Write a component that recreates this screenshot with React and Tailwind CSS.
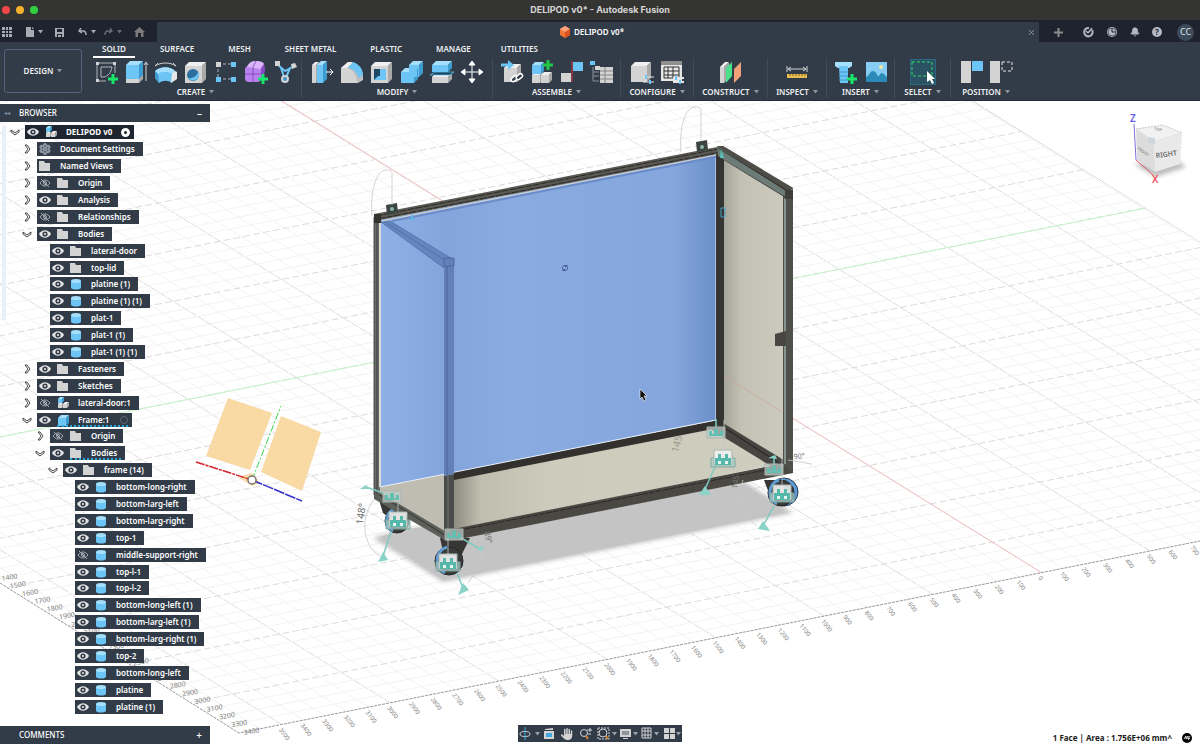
import { Bell, Settings, X } from "lucide-react";
import { FaHand } from "react-icons/fa6";

const BLUE = "#6cc5f5";
const GREY = "#d3d3d3";

const TABS = ["SOLID", "SURFACE", "MESH", "SHEET METAL", "PLASTIC", "MANAGE", "UTILITIES"];

/* ---------- toolbar drawings, all on a 26 x 26 grid ---------- */

function Plus({ x, y, color = "#19e56b" }) {
  return (
    <path d={`M${x - 5} ${y}h10M${x} ${y - 5}v10`} stroke={color} strokeWidth="3" fill="none" />
  );
}

function Block({ x, y, w, h, d = 4, front, top, side }) {
  return (
    <g>
      <path d={`M${x} ${y}h${w}v${h}h${-w}z`} fill={front} />
      <path d={`M${x} ${y}l${d} ${-d}h${w}l${-d} ${d}z`} fill={top} />
      <path d={`M${x + w} ${y}l${d} ${-d}v${h}l${-d} ${d}z`} fill={side} />
    </g>
  );
}

const blueBlock = { front: "#6cc5f5", top: "#a5dffb", side: "#3e9bd0" };
const greyBlock = { front: "#d3d3d3", top: "#efefef", side: "#a9a9a9" };

const ICONS = {
  sketch: (
    <>
      <path d="M4 4h18M4 4v18M4 22h9M22 4v10M8 8v10h3c4-1 7-4 8-10z" stroke="#aeb4bb" fill="none" />
      <path d="M3 3h3v3H3zM20 3h3v3h-3zM3 20h3v3H3z" fill={GREY} />
      <Plus x={20} y={20} />
    </>
  ),
  extrude: (
    <>
      <Block x={3} y={20} w={13} h={4} {...greyBlock} />
      <Block x={3} y={6} w={13} h={14} {...blueBlock} />
      <path d="M23 22V4M21 6l2-3 2 3" stroke={GREY} fill="none" />
    </>
  ),
  revolve: (
    <>
      <path d="M2 12c6-5 15-5 20 0l-3 12c-4-3-9-3-13 0l-4-5z" fill={BLUE} />
      <path d="M2 12c6-5 15-5 20 0l-3 3c-4-3-10-3-14 0z" fill="#a5dffb" />
      <path d="M22 12l2 1v7l-6 4 1-9z" fill="#e7e7e7" />
      <path d="M2 12l3 3 1 9-4-5z" fill="#3e9bd0" />
      <path d="M2 7c6-4 15-4 21 0M2 7l3-3M23 7l-3-3" stroke={GREY} fill="none" />
    </>
  ),
  hole: (
    <>
      <Block x={2} y={7} w={17} h={17} {...greyBlock} />
      <circle cx="10" cy="16" r="6" fill="#2c6f9c" />
      <path d="M5 19a6 6 0 1 0 10-7c0 4-4 8-10 7z" fill={BLUE} />
    </>
  ),
  pattern: (
    <>
      <path d="M5 5h17M5 5v15M5 20h17" stroke="#aeb4bb" strokeDasharray="3 2" fill="none" />
      <path d="M3 3h5v5H3z" fill={GREY} />
      <path d="M18 3h5v5h-5zM3 18h5v5H3zM18 18h5v5h-5z" fill={BLUE} />
    </>
  ),
  form: (
    <>
      <rect x="2" y="7" width="16" height="16" rx="4" fill="#b982ee" />
      <path d="M4 8c2-5 5-6 9-6 5 0 8 1 8 4l-3 4z" fill="#dcb5fb" />
      <path d="M18 9l3-4c2 5 1 11-3 15z" fill="#8a4bc6" />
      <path d="M2 15h16l3-4M10 23V8l3-6" stroke="#7a42b3" strokeWidth="0.8" fill="none" />
      <Plus x={20} y={20} />
    </>
  ),
  derive: (
    <>
      <path d="M4 5l8 7 9-5M8 9l4 12M17 9l-5 12" stroke={BLUE} strokeWidth="2" fill="none" />
      <path d="M2 2h5v5H2zM18 5l4-1 2 4-5 2z" fill="#d3d3d3" />
      <circle cx="12" cy="20" r="4" fill={GREY} />
      <circle cx="12" cy="20" r="2" fill="#4293c4" />
    </>
  ),
  pressPull: (
    <>
      <Block x={3} y={6} w={4} h={18} d={3} {...greyBlock} />
      <Block x={8} y={6} w={6} h={18} {...blueBlock} />
      <path d="M17 13h7M21 10l3 3-3 3" stroke="#fff" fill="none" />
    </>
  ),
  fillet: (
    <>
      <path d="M2 9l7-6c8 0 14 5 15 14v4l-5 3H2z" fill="#bdbdbd" />
      <path d="M2 9h6c6 2 10 7 10 15H2z" fill={GREY} />
      <path d="M2 9l7-6h5L8 9z" fill="#efefef" />
      <path d="M9 9l5-6c6 2 10 7 10 13l-5 3c0-5-4-9-10-10z" fill={BLUE} />
    </>
  ),
  shell: (
    <>
      <Block x={2} y={7} w={17} h={17} {...greyBlock} />
      <path d="M5 10h12v11H5z" fill="#1c4865" />
      <path d="M5 21l4-4h8v4zM11 10h6v7h-6z" fill={BLUE} />
    </>
  ),
  combine: (
    <>
      <Block x={10} y={6} w={10} h={12} {...blueBlock} />
      <Block x={2} y={13} w={13} h={11} {...blueBlock} />
      <path d="M10 9h8v9h-8z" fill={BLUE} />
    </>
  ),
  split: (
    <>
      <Block x={3} y={18} w={16} h={6} {...greyBlock} />
      <path d="M1 16l5-3h19l-4 3z" fill="#17455f" stroke={BLUE} strokeWidth="0.7" />
      <Block x={3} y={6} w={16} h={7} {...blueBlock} />
    </>
  ),
  move: (
    <path
      d="M13 3v20M3 13h20M10 6l3-4 3 4zM10 20l3 4 3-4zM6 10l-4 3 4 3zM20 10l4 3-4 3z"
      stroke="#fff"
      fill="#fff"
    />
  ),
  insertComp: (
    <>
      <Block x={5} y={9} w={13} h={14} {...greyBlock} />
      <path d="M2 6h10" stroke={BLUE} strokeWidth="3" />
      <path d="M9 1l6 5-6 5z" fill={BLUE} />
      <g stroke="#fff" strokeWidth="1.5" fill="#323c49">
        <rect x="12" y="18" width="7" height="4" rx="2" transform="rotate(-40 15 20)" />
        <rect x="17" y="16" width="7" height="4" rx="2" transform="rotate(-40 20 18)" />
      </g>
    </>
  ),
  newComp: (
    <>
      <Block x={3} y={16} w={8} h={8} d={3} {...greyBlock} />
      <Block x={12} y={16} w={8} h={8} d={3} {...greyBlock} />
      <Block x={3} y={6} w={9} h={9} d={3} {...blueBlock} />
      <Plus x={19} y={6} color="#20c745" />
    </>
  ),
  joint: (
    <>
      <path d="M2 14h10v9H2z" fill={GREY} />
      <path d="M14 3h10v9H14z" fill={BLUE} />
      <path d="M13 2v21" stroke="#d5354a" />
    </>
  ),
  bom: (
    <>
      <path d="M1 2h5v4H1z" fill={BLUE} />
      <path d="M6 7h5v4H6z" fill={GREY} />
      <path d="M4 8v14h6M4 13h6M4 17h6" stroke="#8a9097" fill="none" />
      <path d="M11 8h13v16H11z" fill={GREY} />
      <path d="M11 12h13M11 16h13M11 20h13M16 8v16" stroke="#868686" />
    </>
  ),
  configure: (
    <>
      <Block x={2} y={7} w={16} h={16} {...greyBlock} />
      <path d="M14 18h11M14 23h11" stroke="#e7e7e7" />
      <path d="M17 16v4M21 21v4" stroke={BLUE} strokeWidth="2" />
    </>
  ),
  table: (
    <>
      <path d="M2 3h21v19H2z" fill="#e7e7e7" />
      <path d="M2 2h21v4H2z" fill="#8f8f8f" />
      <path d="M5 8h15v11H5zM5 12h15M5 16h15M9 8v11M14 8v11" stroke="#333" fill="none" />
      <path d="M14 19h11M14 23h11" stroke="#e7e7e7" strokeWidth="2" />
      <path d="M17 17v4M21 21v4" stroke={BLUE} strokeWidth="2" />
    </>
  ),
  plane: (
    <>
      <Block x={2} y={8} w={4} h={16} d={5} {...greyBlock} />
      <path d="M8 9l6-6v14l-6 7z" fill="#4be08c" />
      <path d="M16 10l7-7v14l-7 7z" fill="#f2a077" />
    </>
  ),
  measure: (
    <>
      <path d="M3 7v6M23 7v6M4 10h18M7 8l-3 2 3 2M19 8l3 2-3 2" stroke={GREY} fill="none" />
      <path d="M3 15h20v4H3z" fill="#e9bd52" />
      <path d="M6 15v2M9 15v2M12 15v2M15 15v2M18 15v2M21 15v2" stroke="#8a6a1f" />
    </>
  ),
  bolt: (
    <>
      <path d="M2 3h17v4l-3 2H5L2 7z" fill="#a5dffb" />
      <path d="M6 7h9v17H7z" fill={BLUE} />
      <path d="M6 13h9M6 17h9M6 21h9" stroke="#3e9bd0" />
      <Plus x={19} y={20} />
    </>
  ),
  image: (
    <>
      <path d="M3 3h21v20H3z" fill="#87cdf3" />
      <path d="M3 18c3-1 4-6 7-6s4 4 5 5 2-3 4-3 3 3 5 4v5H3z" fill="#2c8ab8" />
      <circle cx="18" cy="8" r="2" fill="#f7eaa6" />
    </>
  ),
  select: (
    <>
      <path d="M0 0h26v26H0z" fill="#2a5262" stroke="#2b7f9c" />
      <path d="M2 3h20v14H2z" stroke="#2fd96a" strokeDasharray="3 2" fill="none" />
      <path d="M17 12v11l3-2 2 4 2-1-2-4h3z" fill="#fff" />
    </>
  ),
  posOne: (
    <>
      <path d="M3 2h10v22H3z" fill={GREY} />
      <path d="M14 2h11v10H14z" fill={BLUE} />
    </>
  ),
  posTwo: (
    <>
      <path d="M2 2h10v22H2z" fill={GREY} />
      <path d="M14 3h10v9H14z" stroke="#e7e7e7" strokeDasharray="3 2" fill="none" />
    </>
  ),
};

const GROUPS = [
  { label: "CREATE", width: "w-[212px]", icons: ["sketch", "extrude", "revolve", "hole", "pattern", "form", "derive"] },
  { label: "MODIFY", width: "w-[191px]", icons: ["pressPull", "fillet", "shell", "combine", "split", "move"] },
  { label: "ASSEMBLE", width: "w-[128px]", icons: ["insertComp", "newComp", "joint", "bom"] },
  { label: "CONFIGURE", width: "w-[73px]", icons: ["configure", "table"] },
  { label: "CONSTRUCT", width: "w-[74px]", icons: ["plane"] },
  { label: "INSPECT", width: "w-[59px]", icons: ["measure"] },
  { label: "INSERT", width: "w-[68px]", icons: ["bolt", "image"] },
  { label: "SELECT", width: "w-[56px]", icons: ["select"] },
  { label: "POSITION", width: "w-[70px]", icons: ["posOne", "posTwo"] },
];

/* ---------- browser tree ---------- */

const TREE = [
  { level: 0, label: "DELIPOD v0", icon: "assembly", eye: "on", arrow: "open", root: true },
  { level: 1, label: "Document Settings", icon: "gear", arrow: "closed" },
  { level: 1, label: "Named Views", icon: "folder", arrow: "closed" },
  { level: 1, label: "Origin", icon: "folder", eye: "off", arrow: "closed" },
  { level: 1, label: "Analysis", icon: "folder", eye: "on", arrow: "closed" },
  { level: 1, label: "Relationships", icon: "folder", eye: "off", arrow: "closed" },
  { level: 1, label: "Bodies", icon: "folder", eye: "on", arrow: "open" },
  { level: 2, label: "lateral-door", icon: "folder", eye: "on" },
  { level: 2, label: "top-lid", icon: "folder", eye: "on" },
  { level: 2, label: "platine (1)", icon: "body", eye: "on" },
  { level: 2, label: "platine (1) (1)", icon: "body", eye: "on" },
  { level: 2, label: "plat-1", icon: "body", eye: "on" },
  { level: 2, label: "plat-1 (1)", icon: "body", eye: "on" },
  { level: 2, label: "plat-1 (1) (1)", icon: "body", eye: "on" },
  { level: 1, label: "Fasteners", icon: "folder", eye: "on", arrow: "closed" },
  { level: 1, label: "Sketches", icon: "folder", eye: "on", arrow: "closed" },
  { level: 1, label: "lateral-door:1", icon: "assembly", eye: "off", arrow: "closed" },
  { level: 1, label: "Frame:1", icon: "component", eye: "on", arrow: "open", marked: true, radio: true },
  { level: 2, label: "Origin", icon: "folder", eye: "off", arrow: "closed" },
  { level: 2, label: "Bodies", icon: "folder", eye: "on", arrow: "open", marked: true },
  { level: 3, label: "frame (14)", icon: "folder", eye: "on", arrow: "open" },
  { level: 4, label: "bottom-long-right", icon: "body", eye: "on" },
  { level: 4, label: "bottom-larg-left", icon: "body", eye: "on" },
  { level: 4, label: "bottom-larg-right", icon: "body", eye: "on" },
  { level: 4, label: "top-1", icon: "body", eye: "on" },
  { level: 4, label: "middle-support-right", icon: "body", eye: "off" },
  { level: 4, label: "top-l-1", icon: "body", eye: "on" },
  { level: 4, label: "top-l-2", icon: "body", eye: "on" },
  { level: 4, label: "bottom-long-left (1)", icon: "body", eye: "on" },
  { level: 4, label: "bottom-larg-left (1)", icon: "body", eye: "on" },
  { level: 4, label: "bottom-larg-right (1)", icon: "body", eye: "on" },
  { level: 4, label: "top-2", icon: "body", eye: "on" },
  { level: 4, label: "bottom-long-left", icon: "body", eye: "on" },
  { level: 4, label: "platine", icon: "body", eye: "on" },
  { level: 4, label: "platine (1)", icon: "body", eye: "on" },
];

const INDENT = ["pl-[9px]", "pl-[21px]", "pl-[34px]", "pl-[47px]", "pl-[59px]"];

function Eye({ off }) {
  return (
    <svg width="12" height="10" viewBox="0 0 12 10" className="shrink-0">
      {off ? (
        <g stroke="#a9afb6" fill="none">
          <path d="M1 5c3-4 7-4 10 0-3 4-7 4-10 0z" />
          <circle cx="6" cy="5" r="1.5" />
          <path d="M2 1l8 8" />
        </g>
      ) : (
        <>
          <path d="M0 5c3-5 9-5 12 0-3 5-9 5-12 0z" fill="#e4e4e4" />
          <circle cx="6" cy="5" r="2.6" fill="#323c49" />
          <circle cx="6" cy="5" r="1.1" fill="#e4e4e4" />
        </>
      )}
    </svg>
  );
}

function TreeIcon({ type }) {
  if (type === "gear") return <Settings size={12} strokeWidth={4} className="shrink-0 text-[#8d98a3]" />;
  return (
    <svg width="12" height="12" viewBox="0 0 12 12" className="shrink-0">
      {type === "folder" && <path d="M0 1h5l1 2h5v8H0z" fill={GREY} />}
      {type === "body" && (
        <>
          <path d="M1 3v7c2 2 8 2 10 0V3z" fill={BLUE} />
          <ellipse cx="6" cy="3" rx="5" ry="2" fill="#a5dffb" />
        </>
      )}
      {type === "component" && <Block x={1} y={4} w={8} h={8} d={3} {...blueBlock} />}
      {type === "assembly" && (
        <>
          <Block x={1} y={2} w={4} h={4} d={2} {...blueBlock} />
          <Block x={1} y={7} w={4} h={4} d={1} {...greyBlock} />
          <Block x={6} y={7} w={4} h={4} d={2} {...greyBlock} />
        </>
      )}
    </svg>
  );
}

function Arrow({ state }) {
  return (
    <svg width="10" height="10" viewBox="0 0 10 10" className="ml-[1px]">
      <path
        d={state === "open" ? "M1 3l4 3 4-3v2L5 8 1 5z" : "M3 1l3 4-3 4h2l3-4-3-4z"}
        fill="#fff"
        stroke="#333"
        strokeWidth="0.9"
      />
    </svg>
  );
}

function TreeRow({ item }) {
  return (
    <li className={`flex min-h-[14px] flex-1 items-center ${INDENT[item.level]}`}>
      <button type="button" aria-label="Toggle" className="w-4 shrink-0 text-left">
        {item.arrow && <Arrow state={item.arrow} />}
      </button>
      <div
        className={`relative flex h-[14px] items-center gap-[6px] pl-[2px] ${
          item.root ? "bg-[#1f2530] font-bold" : "bg-[#323c49]"
        } ${item.root || item.radio ? "pr-1" : "pr-2"} text-white`}
      >
        {item.eye && <Eye off={item.eye === "off"} />}
        <TreeIcon type={item.icon} />
        <span className={`whitespace-nowrap ${item.eye ? "pl-[3px]" : "pl-[3px]"}`}>{item.label}</span>
        {item.root && <span className="ml-[3px] h-[9px] w-[9px] rounded-full border-[3px] border-white" />}
        {item.radio && <span className="ml-[5px] h-2 w-2 rounded-full border border-[#5b6877]" />}
        {item.marked && (
          <span className="absolute right-1 bottom-0 left-5 border-b-2 border-dotted border-[#22a9d8]" />
        )}
      </div>
    </li>
  );
}

function Browser() {
  return (
    <aside className="relative flex w-[210px] flex-1 flex-col pt-[3px] text-[8px] leading-3 font-medium">
      <h2 className="flex h-[18px] items-center bg-[#323c49] pr-2 pl-1 text-white">
        <span className="w-[15px] text-[6px] text-[#7e94ab]">◂◂</span>
        BROWSER
        <button type="button" aria-label="Collapse browser" className="ml-auto text-[10px]">
          –
        </button>
      </h2>
      <div className="flex flex-1 pt-[2px] pb-[11px]">
        <div className="mt-[2px] ml-[2px] h-[194px] w-1 shrink-0 bg-[#e8f0f9]" />
        <ul className="-ml-[6px] flex flex-1 flex-col font-semibold">
          {TREE.map((item, i) => (
            <TreeRow key={i} item={item} />
          ))}
        </ul>
      </div>
      <h2 className="mb-[1px] flex h-[18px] items-center bg-[#323c49] pr-2 pl-[19px] text-white">
        COMMENTS
        <button type="button" aria-label="Add comment" className="ml-auto text-[10px]">
          +
        </button>
      </h2>
    </aside>
  );
}

/* ---------- top bars ---------- */

function Caret({ className = "" }) {
  return (
    <svg width="5" height="4" viewBox="0 0 5 4" className={`shrink-0 ${className}`}>
      <path d="M0 0h5L2.5 3.5z" fill="currentColor" />
    </svg>
  );
}

function TitleBar() {
  return (
    <header className="flex h-5 items-center bg-[#343433] px-[2px] text-[#d6d6d6]">
      <div className="flex flex-1 gap-[6px]">
        <span className="h-2 w-2 rounded-full bg-[#f2464b]" />
        <span className="h-2 w-2 rounded-full bg-[#f7b32d]" />
        <span className="h-2 w-2 rounded-full bg-[#2fd142]" />
      </div>
      <h1 className="font-[Inter] text-[9px] font-bold">DELIPOD v0* - Autodesk Fusion</h1>
      <div className="flex-1" />
    </header>
  );
}

function DocumentBar() {
  return (
    <div className="flex h-[22px] bg-[#1f232e] pt-[2px] text-[#a7abb4]">
      <div className="flex w-[157px] shrink-0 items-center pl-[2px]">
        <button type="button" aria-label="Data panel">
          <svg width="10" height="10" viewBox="0 0 10 10" fill="currentColor">
            <path d="M0 0h3v3H0zM4 0h2v3H4zM7 0h3v3H7zM0 4h3v2H0zM4 4h2v2H4zM7 4h3v2H7zM0 7h3v3H0zM4 7h2v3H4zM7 7h3v3H7z" />
          </svg>
        </button>
        <button type="button" aria-label="File" className="ml-[14px] flex items-center gap-1">
          <svg width="8" height="10" viewBox="0 0 8 10" fill="currentColor">
            <path d="M0 0h5v3h3v7H0zM6 0l2 2H6z" />
          </svg>
          <Caret />
        </button>
        <button type="button" aria-label="Save" className="ml-3">
          <svg width="9" height="9" viewBox="0 0 9 9" fill="currentColor" fillRule="evenodd">
            <path d="M0 0h9v9H0zM2 1v3h5V1zM2 6v3h1V7h3v2h1V6z" />
          </svg>
        </button>
        <button type="button" aria-label="Undo" className="ml-[14px] flex items-center gap-1">
          <svg width="9" height="8" viewBox="0 0 9 8" fill="none" stroke="currentColor" strokeWidth="1.5">
            <path d="M3 0L1 3l3 2M1 3h4c2 0 3 1 3 4" />
          </svg>
          <Caret />
        </button>
        <button type="button" aria-label="Redo" className="ml-2 flex items-center gap-1 text-[#666b75]">
          <svg width="9" height="8" viewBox="0 0 9 8" fill="none" stroke="currentColor" strokeWidth="1.5">
            <path d="M6 0l2 3-3 2M8 3H4C2 3 1 4 1 7" />
          </svg>
          <Caret />
        </button>
        <button type="button" aria-label="Home" className="ml-3 text-[#7b7b7b]">
          <svg width="11" height="10" viewBox="0 0 11 10" fill="currentColor">
            <path d="M5.5 0L11 5H9.500v5H7V6H4v4H1.500V5H0L5.500 0z" />
          </svg>
        </button>
      </div>
      <div className="flex flex-1 items-center bg-[#323c49] pr-[3px]">
        <div className="flex flex-1 items-center justify-center gap-1 text-[8px] font-semibold text-white">
          <svg width="10" height="12" viewBox="0 0 10 12">
            <path d="M5 0l5 3v6l-5 3-5-3V3z" fill="#f0763a" />
            <path d="M5 0l5 3-5 3-5-3z" fill="#fba37a" />
            <path d="M5 6l5-3v6l-5 3z" fill="#d9531e" />
          </svg>
          DELIPOD v0*
        </div>
        <button type="button" aria-label="Close tab">
          <X size={9} />
        </button>
      </div>
      <div className="flex w-[161px] shrink-0 items-center gap-3 pl-[14px] text-[#b4b8c2]">
        <button type="button" aria-label="New tab">
          <svg width="11" height="11" viewBox="0 0 11 11" stroke="#8d8d8d" strokeWidth="2">
            <path d="M5.500 1v9M1 5.500h9" />
          </svg>
        </button>
        <button type="button" aria-label="Extensions" className="ml-[6px]">
          <svg width="12" height="12" viewBox="0 0 12 12" fill="none" stroke="currentColor" strokeWidth="2">
            <path d="M10 4a4.200 4.200 0 1 1-3-2" />
            <path d="M6 7l4-5M4 5l2 2" strokeWidth="1.500" />
          </svg>
        </button>
        <button type="button" aria-label="Job status">
          <svg width="12" height="12" viewBox="0 0 12 12">
            <circle cx="6" cy="6" r="5" fill="currentColor" />
            <path d="M6 2v4h4" stroke="#1f232e" fill="none" />
            <circle cx="6" cy="6" r="4" stroke="#5a5f6a" fill="none" />
          </svg>
        </button>
        <button type="button" aria-label="Notifications">
          <Bell size={10} fill="currentColor" />
        </button>
        <button
          type="button"
          className="flex h-[10px] w-[10px] items-center justify-center rounded-full bg-[#b4b8c2] text-[8px] font-bold text-[#1f232e]"
        >
          ?
        </button>
        <button
          type="button"
          className="ml-[3px] flex h-[17px] w-[17px] items-center justify-center rounded-full bg-[#3d4a5a] text-[9px] text-[#dfe5ec]"
        >
          CC
        </button>
      </div>
    </div>
  );
}

function Ribbon() {
  return (
    <div className="flex h-[59px] border-b border-[#232c3a] bg-[#323c49] text-[8px] font-semibold text-[#eef0f2]">
      <button
        type="button"
        className="mt-[7px] ml-1 flex h-[44px] w-[78px] shrink-0 items-center justify-center gap-1 rounded-[3px] border border-[#52647c]"
      >
        DESIGN
        <Caret className="text-[#8e959e]" />
      </button>
      <div className="ml-[8px] flex flex-1 flex-col">
        <nav className="flex gap-4 pl-[3px]">
          {TABS.map((tab, i) => (
            <button
              key={tab}
              type="button"
              className={`h-4 border-b-2 px-[9px] whitespace-nowrap last:-ml-1 ${i === 0 ? "border-white" : "border-transparent"}`}
            >
              {tab}
            </button>
          ))}
        </nav>
        <div className="flex">
          {GROUPS.map((group) => (
            <div
              key={group.label}
              className={`flex shrink-0 flex-col items-center border-r border-[#3f4b5a] last:border-0 ${group.width}`}
            >
              <div className="flex h-[28px] items-center gap-1">
                {group.icons.map((name) => (
                  <button key={name} type="button" aria-label={name}>
                    <svg width="26" height="26" viewBox="0 0 26 26">
                      {ICONS[name]}
                    </svg>
                  </button>
                ))}
              </div>
              <button type="button" className="flex h-3 items-center gap-1">
                {group.label}
                <Caret className="text-[#8e959e]" />
              </button>
            </div>
          ))}
        </div>
      </div>
    </div>
  );
}

/* ---------- 3D viewport ---------- */

const range = (from, to) => Array.from({ length: to - from + 1 }, (_, i) => from + i);

function FloorGrid() {
  return (
    <g fill="none">
      <clipPath id="floor">
        <path d="M973 101L1400 366V501L239 733L-100 520V101z" />
      </clipPath>
      <g clipPath="url(#floor)">
        {range(-52, 24).map((k) => {
          const x = 1042 + 21.7 * k;
          const y = 573 - 4.34 * k;
          const major = k % 5 === 0;
          return (
            <path
              key={k}
              d={`M${x} ${y}l-1000 -620`}
              stroke={major ? "#dedede" : "#f3f3f3"}
              strokeDasharray={major ? "8 1" : undefined}
            />
          );
        })}
        <path d="M973 101l300 186" stroke="#aaa" />
        {range(-36, 34).map((n) => (
          <path
            key={n}
            d={`M-100 ${457 + 10.12 * n}l1400 -280`}
            stroke={n % 5 === 0 ? "#dcdcdc" : "#f3f3f3"}
            strokeDasharray={n % 5 === 0 ? "7 3" : undefined}
          />
        ))}
        <path d="M0 437L1146 208" stroke="#c4f5c4" />
        <path d="M282 101L1042 573" stroke="#f5c0c3" />
      </g>
      <path d="M0 583L239 733L1200 541" stroke="#9a9a9a" strokeDasharray="3 1" />
      <g fill="#7d7d7d" fontSize="7">
        {range(14, 34).map((n) => (
          <text
            key={n}
            transform={`translate(${Math.max(2, 239 - 12.3 * (34 - n) + 5)} ${733 - 7.7 * (34 - n) + 2}) rotate(-10)`}
          >
            {n * 100}
          </text>
        ))}
        {range(-35, 7).map((k) => (
          <text
            key={k}
            fontSize="6"
            transform={`translate(${1042 + 21.7 * k - 4} ${573 - 4.34 * k + 5}) rotate(52)`}
          >
            {Math.abs(k) * 100}
          </text>
        ))}
      </g>
    </g>
  );
}

function OriginPlanes() {
  return (
    <g>
      <path d="M228 398l44 15-22 57-44-14zM281 416l40 16-19 59-41-19z" fill="#f9d9a4" />
      <path d="M238 477l14-4 8 10-8 3z" fill="#f9d9a4" />
      <path d="M252 480l29-74" stroke="#37d64b" strokeDasharray="7 2 2 2" />
      <path d="M196 462l56 18" stroke="#d8232c" strokeWidth="1.5" strokeDasharray="9 1 3 1" />
      <path d="M252 480l50 21" stroke="#3232c8" strokeWidth="1.5" strokeDasharray="11 1" />
      <circle cx="252" cy="480" r="4" fill="#fff" stroke="#777" strokeWidth="1.5" />
    </g>
  );
}

function Wheel({ x, y, r }) {
  return (
    <g>
      <circle cx={x} cy={y} r={r} fill="#3a3b3b" stroke="#262626" />
      <path d={`M${x - 2} ${y - r}a${r} ${r} 0 0 0 -2 ${2 * r - 2}`} stroke="#5f9bd3" strokeWidth="3" fill="none" />
      <circle cx={x} cy={y} r={r - 6} fill="#5d6665" />
    </g>
  );
}

function JointGlyph({ x, y, small }) {
  if (small) {
    return (
      <g transform={`translate(${x} ${y})`}>
        <path d="M-9 -5H9V6H-9z" fill="#c3cfca" fillOpacity="0.7" stroke="#a9b4b0" />
        <path d="M-7 4V-1h3v3h2v-5h4v5h2v-3h3v5z" fill="#62bfb1" />
      </g>
    );
  }
  return (
    <g transform={`translate(${x} ${y})`}>
      <path d="M-12 -1h24v9h-24z" fill="#a7cfc7" fillOpacity="0.7" stroke="#7fa8a0" />
      <path d="M-9 -9H9V6H-9z" fill="#eef1f0" fillOpacity="0.9" stroke="#a9b4b0" />
      <path d="M-8 6V-1h3v-4h3v4h4v-4h3v4h3v7z" fill="#55b8aa" />
      <path d="M-5 2h3v3h-3zM2 2h3v3H2z" fill="#e8f4f1" />
    </g>
  );
}

function Cart() {
  return (
    <g>
      <defs>
        <linearGradient id="glass" x1="0" x2="1">
          <stop offset="0" stopColor="#8eb0e6" />
          <stop offset="0.2" stopColor="#84a5db" />
          <stop offset="0.4" stopColor="#8aabe0" />
          <stop offset="0.88" stopColor="#84a6dc" />
          <stop offset="1" stopColor="#6c8ec9" />
        </linearGradient>
        <linearGradient id="side" x1="0" x2="1">
          <stop offset="0" stopColor="#a3a397" />
          <stop offset="0.3" stopColor="#c3c2b4" />
          <stop offset="1" stopColor="#cbcabd" />
        </linearGradient>
        <linearGradient id="deck" x1="0" x2="1">
          <stop offset="0" stopColor="#8e8d82" />
          <stop offset="0.08" stopColor="#bfbdae" />
          <stop offset="0.3" stopColor="#cdcbbc" />
          <stop offset="1" stopColor="#cfcdbe" />
        </linearGradient>
        <filter id="soft">
          <feGaussianBlur stdDeviation="2" />
        </filter>
      </defs>

      {/* ground shadow */}
      <path d="M373 538L443 582L793 513L745 482L400 530z" fill="#c2c2c2" filter="url(#soft)" />
      <path d="M380 537L443 580L785 513L745 485L400 530z" fill="#c4c4c4" />

      {/* casters */}
      <path d="M379 500l30 18-8 9-18-14zM440 538h30l-11 22-15-4zM764 480h28l-4 12-18 4z" fill="#383735" />
      <Wheel x={397} y={521} r={12} />
      <Wheel x={449} y={561} r={14} />
      <circle cx={784} cy={492} r={14} fill="#5f9bd3" stroke="#2c3e50" />
      <Wheel x={781} y={493} r={13} />

      {/* deck and side panels */}
      <path d="M454 478L718 426L778 464L454 530z" fill="url(#deck)" />
      <path d="M380 487L444 474V534L380 494z" fill="#bfbdb2" />
      <path d="M723 160L785 197V464L723 424z" fill="url(#side)" />
      <path d="M724 376L784 413" stroke="#cf9f99" strokeWidth="0.6" />

      {/* bottom rails */}
      <path d="M454 472L718 420V428L454 480z" fill="#33312e" />
      <path d="M718 420L787 462L774 468L712 430z" fill="#464541" />
      <path d="M720 425L782 465" stroke="#1f1f1e" />
      <path d="M448 530L775 465L793 466V473L450 541z" fill="#4a4843" />
      <path d="M450 532L776 468" stroke="#2a2927" strokeDasharray="6 1" />
      <path d="M374 489L448 533V542L374 499z" fill="#5c5f5a" />
      <path d="M378 494L448 537" stroke="#343432" />

      {/* selected back panel */}
      <path d="M380 220L716 154V420L380 487z" fill="url(#glass)" />
      <path d="M380 487L716 420V154" stroke="#e6edf6" fill="none" />
      <path d="M392 221L716 157" stroke="#6a8ccb" strokeWidth="2" />
      <path d="M381 222L390 221L454 260L444 268z" fill="#6585bf" stroke="#47659e" strokeWidth="0.6" />
      <path d="M385 222L448 262" stroke="#47659e" strokeWidth="0.6" />
      <path d="M444 258h10v216l-10 2z" fill="#6381b8" />
      <path d="M444 258h10v8h-10zM447 266v210" stroke="#3f5c94" strokeWidth="0.7" fill="none" />
      <path d="M444 476l10-2v66l-6 2-4-4z" fill="#4a4c4a" />
      <path d="M448 476v64" stroke="#737772" />

      {/* posts */}
      <path d="M374 217h6v278l-6-4z" fill="#696c67" />
      <path d="M374 217v278M377 220v274" stroke="#343432" strokeWidth="0.8" />
      <path d="M380 222v265" stroke="#dcdad2" strokeWidth="2" />
      <path d="M716 152h8v276l-8-4z" fill="#343433" />
      <path d="M783 195l10-5v283l-10-8z" fill="#50504b" />
      <path d="M785 198v266" stroke="#85948f" strokeWidth="2" />

      {/* top rails */}
      <path d="M374 214L717 147L723 153L380 220z" fill="#5a5852" />
      <path d="M376 216L718 149M378 219L720 152" stroke="#2b2a27" strokeDasharray="7 1" />
      <path d="M382 221L716 155" stroke="#d6d4ca" />
      <path d="M717 146L723 146L793 188V199L785 197L718 156z" fill="#6d7b77" />
      <path d="M717 146h6l70 42-6 4z" fill="#4f4d48" />
      <path d="M785 190h8v9h-8z" fill="#3f3e3a" />
      <path d="M718 148L786 190M724 160L785 197" stroke="#2b2a27" strokeWidth="0.8" />
      <path d="M374 214h7v9h-7z" fill="#33322f" />
      <path d="M775 334l11-3v15h-11z" fill="#474642" />
      <path d="M386 205l11-2 1 10-11 2zM696 142l11-2 1 10-11 2z" fill="#3c4542" />
      <circle cx="392" cy="209" r="2" fill="#8ab8ad" />
      <circle cx="702" cy="147" r="2" fill="#8ab8ad" />
      <path d="M412 213l2 7h-4z" fill="#5cb7e5" />
      <path d="M721 208h4v9h-4z" fill="none" stroke="#43a3c9" />
      <path d="M721 149l3 9h-4z" fill="#58c3bb" />

      {/* motion arcs and joints */}
      <g fill="none" stroke="#c8c8c8" strokeWidth="0.8">
        <path d="M372 216c-2-24 4-46 14-46 4 0 6 1 6 3v32" />
        <path d="M681 152c-2-24 4-45 14-45 4 0 6 1 6 3v30" />
        <path d="M374 500c-14 16-12 46 6 56M482 535c2 18-2 32-14 48M743 480c-6 16 0 36 14 46M788 460l24 4" />
        <path d="M398 500v20M448 538v20M724 420v40M782 452v40" />
      </g>
      <g stroke="#7fcabf" strokeWidth="1.500">
        <path d="M391 532L383 556M457 573l6 15M716 465l-11 24M774 506l-11 20M366 487l26 9M458 536l22 13M716 419v8M774 457v8" />
      </g>
      <g fill="#8ad3c8">
        <path d="M383 552l5 8-10 2zM463 583l6 7-11 5zM705 486l6 9-12 0zM763 521l7 10-12-2zM360 489l6-4 4 4zM476 549l8-3-2 5zM768 458l7-3 2 4z" />
      </g>
      <JointGlyph x={392} y={496} small />
      <JointGlyph x={398} y={521} />
      <JointGlyph x={454} y={534} small />
      <JointGlyph x={448} y={563} />
      <JointGlyph x={716} y={432} small />
      <JointGlyph x={723} y={459} />
      <JointGlyph x={774} y={469} small />
      <JointGlyph x={782} y={494} />
      <g fill="#6f6f6f" fontSize="10">
        <text transform="translate(363 525) rotate(-82)">148°</text>
        <text transform="translate(678 453) rotate(-75)" fill="#9b998e">
          145
        </text>
        <text transform="translate(737 489) rotate(-80)" fontSize="8">
          145
        </text>
        <text transform="translate(484 532) rotate(75)" fontSize="8">
          89°
        </text>
        <text transform="translate(794 459) rotate(-5)" fontSize="7">
          90°
        </text>
      </g>

      {/* face centre and cursor */}
      <circle cx="565" cy="268" r="2.500" fill="#9db9e8" stroke="#3d5a92" />
      <path d="M565 268v-3h3zM565 268v3h-3z" fill="#3d5a92" />
      <path d="M640 389v10l2-2 2 4 2-1-2-4h3z" fill="#111" stroke="#fff" strokeWidth="0.6" />
    </g>
  );
}

function ViewCube() {
  return (
    <g>
      <path d="M1134 164l22 13 30-10-10-8z" fill="#bdbdbd" filter="url(#soft)" />
      <path d="M1136 129l27-4 19 8-28 9z" fill="#f1f1f1" stroke="#c9c9c9" strokeDasharray="2 1" />
      <path d="M1136 129l18 13 1 30-18-12z" fill="#dcdcdc" />
      <path d="M1154 142l28-9-2 31-25 8z" fill="#e9e9e9" />
      <path d="M1148 137l7 1v6l-7-1z" fill="#d0d5dd" />
      <path d="M1134 124l2 36" stroke="#7a70e0" />
      <path d="M1136 160l17 15" stroke="#e0606a" />
      <g fontWeight="600">
        <text x="1130" y="122" fontSize="10" fill="#6a5fe0">
          Z
        </text>
        <text x="1152" y="183" fontSize="10" fill="#f0525e">
          X
        </text>
        <text transform="translate(1156 158) rotate(-7)" fontSize="7" fill="#6e6e6e">
          RIGHT
        </text>
        <text transform="translate(1137 149) rotate(35)" fontSize="4" fill="#8c8c8c">
          FRONT
        </text>
        <text transform="translate(1154 130) rotate(10)" fontSize="4" fill="#8c8c8c">
          TOP
        </text>
      </g>
    </g>
  );
}

function Scene() {
  return (
    <svg
      viewBox="0 101 1200 644"
      preserveAspectRatio="xMidYMid slice"
      className="absolute inset-0 h-full w-full"
      role="img"
      aria-label="Model view"
    >
      <FloorGrid />
      <OriginPlanes />
      <Cart />
      <ViewCube />
    </svg>
  );
}

function NavBar() {
  const line = { fill: "none", stroke: "#d0d3d7" };
  return (
    <div className="absolute bottom-[3px] left-1/2 flex h-[17px] -translate-x-1/2 items-center gap-[2px] bg-[#323c49] px-[1px] text-[#99a0a9]">
      <button type="button" aria-label="Orbit" className="flex items-center gap-[3px]">
        <svg width="13" height="13" viewBox="0 0 13 13">
          <ellipse cx="6" cy="7" rx="5" ry="2.500" {...line} />
          <path d="M6 0v13" stroke="#3aa6d4" />
        </svg>
        <Caret />
      </button>
      <button type="button" aria-label="Look at">
        <svg width="13" height="13" viewBox="0 0 13 13">
          <path d="M2 4h10v8H2zM3 2l8-1v2H3z" fill={GREY} />
          <path d="M4 6h6v4H4z" fill="#45a8dc" />
        </svg>
      </button>
      <button type="button" aria-label="Pan" className="ml-1">
        <FaHand size={12} className="text-[#d3d3d3]" />
      </button>
      <button type="button" aria-label="Zoom" className="ml-1">
        <svg width="14" height="13" viewBox="0 0 14 13">
          <circle cx="5" cy="6" r="3.500" {...line} />
          <path d="M8 3h5M11 1v4M9 7h3" {...line} />
          <path d="M7 9l2 3" stroke="#d48334" strokeWidth="2" />
        </svg>
      </button>
      <button type="button" aria-label="Fit" className="ml-[2px] flex items-center gap-[2px]">
        <svg width="13" height="13" viewBox="0 0 13 13">
          <path d="M1 1h11v11H1z" {...line} strokeDasharray="2 1" />
          <circle cx="6" cy="6" r="4" {...line} />
          <path d="M9 9l2 3" stroke="#d48334" strokeWidth="2" />
        </svg>
        <Caret />
      </button>
      <button type="button" aria-label="Display settings" className="flex items-center gap-[1px]">
        <svg width="13" height="13" viewBox="0 0 13 13">
          <path d="M1 2h11v8H1zM4 11h5v1H4z" fill={GREY} />
          <path d="M3 4h7v4H3z" fill="#8f959c" />
        </svg>
        <Caret />
      </button>
      <button type="button" aria-label="Grid and snaps" className="flex items-center gap-[2px]">
        <svg width="12" height="13" viewBox="0 0 12 13">
          <path d="M2 1h9v10H2zM5 1v10M8 1v10M2 4h9M2 8h9" {...line} />
        </svg>
        <Caret />
      </button>
      <button type="button" aria-label="Viewports" className="ml-[2px] flex items-center">
        <svg width="13" height="13" viewBox="0 0 13 13">
          <path d="M1 1h5v5H1zM7 1h5v5H7zM1 7h5v5H1zM7 7h5v5H7z" fill={GREY} />
        </svg>
        <Caret />
      </button>
    </div>
  );
}

export default function App() {
  return (
    <div className="flex min-h-screen flex-col overflow-hidden bg-white font-['Noto_Sans',sans-serif]">
      <TitleBar />
      <DocumentBar />
      <Ribbon />
      <main className="relative flex flex-1 flex-col">
        <Scene />
        <Browser />
        <NavBar />
        <div className="absolute right-2 bottom-0 flex h-[15px] items-center gap-[10px] text-[8px] font-bold text-[#1c1c1c]">
          1 Face | Area : 1.756E+06 mm^
          <svg width="10" height="10" viewBox="0 0 10 10">
            <circle cx="5" cy="5" r="5" />
            <path d="M2 6l2-3v3l2-3v3l2-3M6 7l2-2" stroke="#fff" strokeWidth="0.8" fill="none" />
          </svg>
        </div>
      </main>
    </div>
  );
}
